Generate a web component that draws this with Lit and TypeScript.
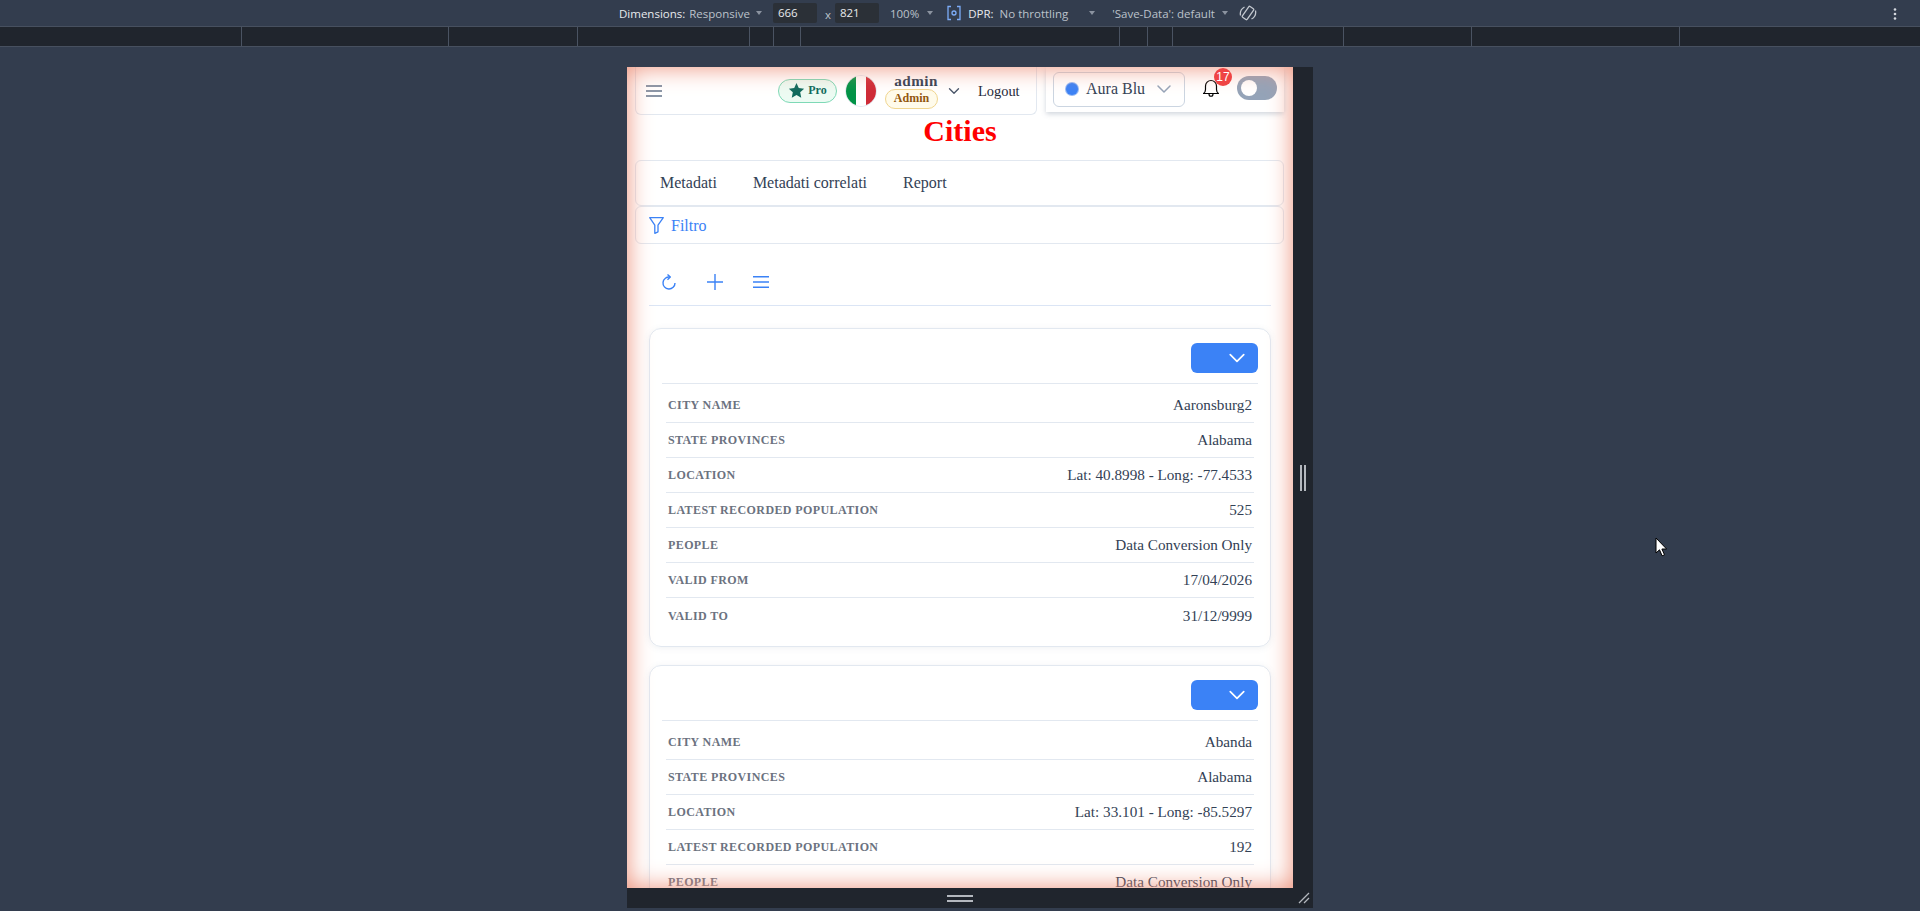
import { LitElement, html, css } from "lit";
import { customElement } from "lit/decorators.js";

const chevron = (size: number, color: string, w = 2) => html`<svg width=${size} height=${size} viewBox="0 0 16 16" fill="none" stroke=${color} stroke-width=${w} stroke-linecap="round" stroke-linejoin="round"><path d="M2 5l6 6 6-6"/></svg>`;

const TICKS = [241, 448, 577, 749, 773, 800, 1119, 1147, 1172, 1343, 1471, 1679];

const CARDS = [
  [["City Name", "Aaronsburg2"], ["State Provinces", "Alabama"], ["Location", "Lat: 40.8998 - Long: -77.4533"], ["Latest Recorded Population", "525"], ["People", "Data Conversion Only"], ["Valid From", "17/04/2026"], ["Valid To", "31/12/9999"]],
  [["City Name", "Abanda"], ["State Provinces", "Alabama"], ["Location", "Lat: 33.101 - Long: -85.5297"], ["Latest Recorded Population", "192"], ["People", "Data Conversion Only"], ["Valid From", "17/04/2026"], ["Valid To", "31/12/9999"]],
];

@customElement("app-root")
export class AppRoot extends LitElement {
  static styles = css`
    :host { display: block; width: 1920px; height: 911px; overflow: hidden; background: #333d4e; position: relative; font-family: "Liberation Serif", serif; }
    .tools { height: 27px; box-sizing: border-box; border-bottom: 1px solid #47505f; display: flex; align-items: center; padding-left: 619px; color: #d5d9df; font: 11.5px "Open Sans", sans-serif; white-space: nowrap; }
    .tools .lbl { color: #e8eaed; }
    .tools .dim { color: #bcc2cb; }
    .arrow { width: 0; height: 0; border: 3.5px solid transparent; border-top: 4px solid #8b93a0; border-bottom: 0; }
    .inp { width: 44px; height: 20px; line-height: 20px; background: #2b3037; box-sizing: border-box; padding-left: 5px; color: #e8eaed; border-radius: 2px; }
    .kebab { position: absolute; left: 1892px; top: 7px; }
    .ruler { height: 19px; background: #20252d; border-bottom: 1px solid #47505f; position: relative; }
    .tick { position: absolute; top: 0; bottom: 0; width: 1px; background: #4a5362; }
    .stage { display: grid; grid-template-columns: 666px 20px; grid-template-rows: 821px 20px; padding: 20px 0 0 627px; }
    .page { background: #fff; position: relative; overflow: hidden; color: #334155; }
    .glow { position: absolute; inset: 0; pointer-events: none; box-shadow: inset 0 0 24px #ec8f78; z-index: 5; }
    .side { background: #20252d; display: flex; align-items: center; justify-content: center; gap: 2px; }
    .side i { width: 2px; height: 26px; background: #b4b8be; }
    .bottom { grid-column: 1 / 3; background: #20252d; display: flex; flex-direction: column; align-items: center; justify-content: center; gap: 3px; position: relative; padding-right: 20px; }
    .bottom i { width: 26px; height: 2px; background: #b4b8be; }
    .corner { position: absolute; right: 3px; bottom: 4px; }

    .head { display: flex; justify-content: space-between; align-items: flex-start; padding: 0 9px 0 8px; }
    .nav { width: 402px; height: 48px; box-sizing: border-box; border: 1px solid #e2e8f0; border-top: 0; border-radius: 0 0 6px 6px; display: flex; align-items: center; padding: 0 0 0 9px; }
    .burger { display: flex; margin-right: 115px; }
    .pro { width: 59px; height: 24px; box-sizing: border-box; border: 1px solid #7ed9b6; background: #ecfbf3; border-radius: 12px; display: flex; align-items: center; justify-content: center; gap: 3px; color: #0f6b5e; font-size: 12px; font-weight: 700; }
    .flag { width: 32px; height: 32px; margin-left: 8px; flex: none; border-radius: 50%; overflow: hidden; border: 1px solid #e2e8f0; box-sizing: border-box; display: flex; }
    .flag i { flex: 1; }
    .who { width: 53px; margin-left: 8px; display: flex; flex-direction: column; align-items: flex-end; }
    .who b { font-size: 15.2px; line-height: 16px; letter-spacing: .5px; color: #334155; }
    .admin { width: 53px; height: 20px; box-sizing: border-box; border: 1px solid #f0d690; background: #fffbeb; border-radius: 10px; color: #92560e; font-size: 12px; font-weight: 700; display: flex; align-items: center; justify-content: center; }
    .nav .ch { display: flex; margin: 0 18px 0 10px; }
    .logout { font-size: 14.4px; color: #1e293b; padding-top: 1px; }
    .panel { width: 238px; height: 45px; box-sizing: border-box; background: #fff; box-shadow: 0 2px 5px rgba(100,116,139,.3); display: flex; align-items: center; padding: 0 7px; }
    .select { width: 132px; height: 35px; margin-top: -1px; box-sizing: border-box; border: 1px solid #cbd5e1; border-radius: 6px; display: flex; align-items: center; padding: 0 12px; }
    .dot { width: 12px; height: 12px; border-radius: 50%; background: #3b82f6; box-shadow: 0 0 0 1px #93b8f5; margin-right: 8px; }
    .select span { font-size: 16px; color: #334155; flex: 1; white-space: nowrap; }
    .bell { position: relative; display: flex; margin: -3px 0 0 18px; }
    .count { position: absolute; left: 11px; top: -11px; width: 18px; height: 18px; border-radius: 50%; background: #ef4444; color: #fff; font: 12px/18px "Liberation Sans", sans-serif; text-align: center; z-index: 6; }
    .toggle { width: 40px; height: 24px; border-radius: 12px; background: #94a3b8; margin: -3px 0 0 18px; display: flex; align-items: center; padding-left: 4px; box-sizing: border-box; }
    .toggle i { width: 16px; height: 16px; border-radius: 50%; background: #fff; }

    h1 { margin: -1px 0 0; font-size: 30px; line-height: 34px; color: #f00; text-align: center; font-weight: 700; }
    .box { margin: 0 9px 0 8px; box-sizing: border-box; border: 1px solid #e2e8f0; border-radius: 6px; }
    .tabs { height: 46px; margin-top: 12px; display: flex; align-items: center; padding-left: 24px; gap: 36px; font-size: 16px; color: #334155; }
    .filter { height: 38px; display: flex; align-items: center; padding: 1px 0 0 13px; gap: 7px; color: #3b82f6; font-size: 16px; }
    .main { padding: 0 22px; }
    .toolbar { height: 62px; box-sizing: border-box; border-bottom: 1px solid #dbe5f5; display: flex; align-items: center; gap: 30px; padding: 14px 0 0 12px; }
    .toolbar svg { display: block; }
    .card { margin-top: 18px; border: 1px solid #e2e8f0; border-radius: 12px; padding: 14px 12px 0; height: 319px; box-sizing: border-box; box-shadow: 0 1px 6px rgba(100,116,139,.1); }
    .toolbar + .card { margin-top: 22px; }
    .card-top { height: 41px; box-sizing: border-box; border-bottom: 1px solid #e2e8f0; display: flex; justify-content: flex-end; align-items: flex-start; }
    .btn { width: 67px; height: 30px; background: #3b82f6; border-radius: 6px; display: flex; align-items: center; justify-content: flex-end; padding-right: 12px; box-sizing: border-box; }
    .rows { padding: 4px 4px 0; }
    .row { height: 35px; box-sizing: border-box; border-bottom: 1px solid #e2e8f0; display: flex; justify-content: space-between; align-items: center; padding: 0 2px; }
    .row:last-child { border-bottom: 0; }
    .k { font-size: 12px; font-weight: 700; text-transform: uppercase; color: #6b7280; letter-spacing: .4px; padding-top: 1px; }
    .v { font-size: 15.2px; color: #334155; }
    .cursor { position: absolute; left: 1655px; top: 537px; }
  `;

  render() {
    return html`
      <div class="tools">
        <span class="lbl">Dimensions:</span>
        <span class="dim" style="margin-left:4px">Responsive</span>
        <span class="arrow" style="margin:0 11px 0 6px"></span>
        <span class="inp">666</span>
        <span class="dim" style="margin:2px 4px 0 8px">x</span>
        <span class="inp">821</span>
        <span class="dim" style="margin-left:11px">100%</span>
        <span class="arrow" style="margin:0 13px 0 8px"></span>
        <svg width="16" height="16" viewBox="0 0 16 16" fill="none" stroke="#7cacf8" stroke-width="1.3"><path d="M5 1.5H2v13h3M11 1.5h3v13h-3"/><circle cx="8" cy="8" r="2"/></svg>
        <span class="lbl" style="margin-left:6px">DPR:</span>
        <span class="dim" style="margin-left:6px">No throttling</span>
        <span class="arrow" style="margin:0 17px 0 21px"></span>
        <span class="dim">'Save-Data': default</span>
        <span class="arrow" style="margin:0 11px 0 7px"></span>
        <svg width="18" height="18" viewBox="0 0 18 18" fill="none" stroke="#c3c8cf" stroke-width="1.3"><rect x="6" y="2.5" width="6" height="13" rx="1" transform="rotate(35 9 9)"/><path d="M1.5 11.5a8 8 0 0 1 4-8.5M16.500 6.500a8 8 0 0 1-4 8.500"/></svg>
        <svg class="kebab" width="6" height="14" viewBox="0 0 6 14" fill="#d5d9df"><circle cx="3" cy="2.5" r="1.3"/><circle cx="3" cy="7" r="1.3"/><circle cx="3" cy="11.5" r="1.3"/></svg>
      </div>
      <div class="ruler">${TICKS.map((t) => html`<span class="tick" style="left:${t}px"></span>`)}</div>
      <div class="stage">
        <div class="page">
          <div class="head">
            <div class="nav">
              <span class="burger"><svg width="18" height="14" viewBox="0 0 18 14" fill="none" stroke="#64748b" stroke-width="1.6"><path d="M1 2h16M1 7h16M1 12h16"/></svg></span>
              <span class="pro"><svg width="17" height="17" viewBox="0 0 24 24" fill="#0f6b5e"><path d="M12 1.500l3.200 7 7.600.9-5.600 5.200 1.500 7.500L12 18.300l-6.700 3.800 1.500-7.500L1.200 9.400l7.600-.9z"/></svg>Pro</span>
              <span class="flag"><i style="background:#009246"></i><i style="background:#fff"></i><i style="background:#ce2b37"></i></span>
              <span class="who"><b>admin</b><span class="admin">Admin</span></span>
              <span class="ch">${chevron(12, "#475569", 1.8)}</span>
              <span class="logout">Logout</span>
            </div>
            <div class="panel">
              <div class="select"><i class="dot"></i><span>Aura Blu</span>${chevron(16, "#94a3b8", 1.5)}</div>
              <span class="bell">
                <svg width="16" height="18" viewBox="0 0 16 18" fill="none" stroke="#000" stroke-width="1.2" stroke-linejoin="round"><path d="M.5 14.500c1.500-1 2-2 2-4V7a5.500 5.500 0 0 1 11 0v3.500c0 2 .5 3 2 4zM6 15c0 3 4 3 4 0"/></svg>
                <span class="count">17</span>
              </span>
              <span class="toggle"><i></i></span>
            </div>
          </div>
          <h1>Cities</h1>
          <div class="box tabs"><span>Metadati</span><span>Metadati correlati</span><span>Report</span></div>
          <div class="box filter">
            <svg width="15" height="17" viewBox="0 0 15 17" fill="none" stroke="#3b82f6" stroke-width="1.3" stroke-linejoin="round"><path d="M.7.7h13.600L9 8.200v6.600l-3.200 1.500V8.200z"/></svg>
            Filtro
          </div>
          <div class="main">
            <div class="toolbar">
              <svg width="16" height="16" viewBox="0 0 16 16" fill="none" stroke="#3b82f6" stroke-width="1.4"><path d="M9 3.100A6 6 0 1 0 14 9"/><path d="M6.500.5L9.300 3.100 6.500 5.700" stroke-linejoin="round"/></svg>
              <svg width="16" height="16" viewBox="0 0 16 16" fill="none" stroke="#3b82f6" stroke-width="1.4"><path d="M8 0v16M0 8h16"/></svg>
              <svg width="16" height="16" viewBox="0 0 16 16" fill="none" stroke="#3b82f6" stroke-width="1.4"><path d="M0 2.700h16M0 8h16M0 13.300h16"/></svg>
            </div>
            ${CARDS.map((rows) => html`
              <div class="card">
                <div class="card-top"><span class="btn">${chevron(18, "#fff", 1.5)}</span></div>
                <div class="rows">
                  ${rows.map(([k, v]) => html`<div class="row"><span class="k">${k}</span><span class="v">${v}</span></div>`)}
                </div>
              </div>`)}
          </div>
          <div class="glow"></div>
        </div>
        <div class="side"><i></i><i></i></div>
        <div class="bottom"><i></i><i></i>
          <svg class="corner" width="12" height="12" viewBox="0 0 12 12" stroke="#b4b8be" stroke-width="1.300"><path d="M1 11L11 1M6 11l5-5"/></svg>
        </div>
      </div>
      <svg class="cursor" width="13" height="20" viewBox="0 0 13 20"><path d="M1 1v15l3.500-3.200 2.600 6 2.400-1-2.600-5.800h4.700z" fill="#fff" stroke="#000"/></svg>
    `;
  }
}
